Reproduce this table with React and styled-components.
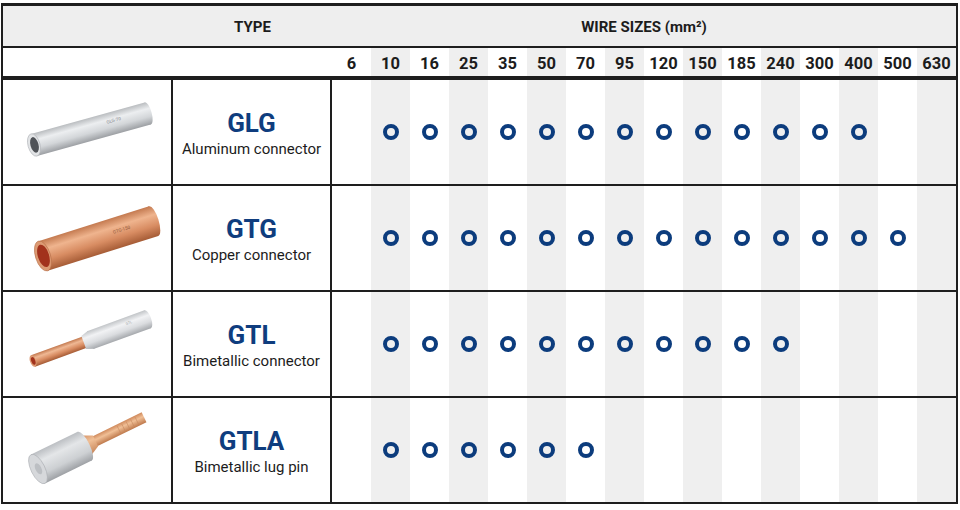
import React from 'react';
import styled, { createGlobalStyle } from 'styled-components';

const SIZES = [6, 10, 16, 25, 35, 50, 70, 95, 120, 150, 185, 240, 300, 400, 500, 630];

// drawings of the four connectors

const AluminumTube = () => (
    <svg width="168" height="104" viewBox="0 0 168 104">
        <defs>
            <linearGradient id="aluA" x1="0" y1="0" x2="0" y2="1">
                <stop offset="0" stopColor="#b9bcbf" />
                <stop offset="0.3" stopColor="#eceef0" />
                <stop offset="0.65" stopColor="#d3d6d9" />
                <stop offset="1" stopColor="#9c9fa3" />
            </linearGradient>
        </defs>
        <g transform="translate(31 65) rotate(-15.5)">
            <rect x="0" y="-11.5" width="118" height="23" fill="url(#aluA)" />
            <ellipse cx="118" cy="0" rx="4" ry="11.5" fill="url(#aluA)" />
            <ellipse cx="0" cy="0" rx="6" ry="11.5" fill="#e2e4e6" stroke="#aeb1b5" strokeWidth="0.6" />
            <ellipse cx="0.5" cy="0" rx="4" ry="8" fill="#505358" />
            <text x="76" y="-1" fontSize="4.5" fill="#85888c" fontFamily="Roboto, sans-serif">GLG-70</text>
        </g>
    </svg>
);

const CopperTube = () => (
    <svg width="168" height="104" viewBox="0 0 168 104">
        <defs>
            <linearGradient id="cuA" x1="0" y1="0" x2="0" y2="1">
                <stop offset="0" stopColor="#c47a50" />
                <stop offset="0.3" stopColor="#efb48e" />
                <stop offset="0.65" stopColor="#d88c62" />
                <stop offset="1" stopColor="#a65c36" />
            </linearGradient>
        </defs>
        <g transform="translate(40 70) rotate(-17.5)">
            <rect x="0" y="-15.5" width="116" height="31" fill="url(#cuA)" />
            <ellipse cx="116" cy="0" rx="5" ry="15.5" fill="url(#cuA)" />
            <ellipse cx="0" cy="0" rx="7.5" ry="15.5" fill="#dc9a73" stroke="#b86f48" strokeWidth="0.6" />
            <ellipse cx="0.5" cy="0" rx="5.6" ry="11.6" fill="#a2321c" />
            <text x="74" y="0" fontSize="4.5" fill="#8a5234" fontFamily="Roboto, sans-serif">GTG-150</text>
        </g>
    </svg>
);

const BimetalTube = () => (
    <svg width="168" height="104" viewBox="0 0 168 104">
        <defs>
            <linearGradient id="cuB" x1="0" y1="0" x2="0" y2="1">
                <stop offset="0" stopColor="#c47a50" />
                <stop offset="0.3" stopColor="#efb894" />
                <stop offset="0.65" stopColor="#d88c62" />
                <stop offset="1" stopColor="#a65c36" />
            </linearGradient>
            <linearGradient id="aluB" x1="0" y1="0" x2="0" y2="1">
                <stop offset="0" stopColor="#c2c5c8" />
                <stop offset="0.3" stopColor="#f1f2f4" />
                <stop offset="0.65" stopColor="#dadcdf" />
                <stop offset="1" stopColor="#a6a9ad" />
            </linearGradient>
        </defs>
        <g transform="translate(30 69) rotate(-20)">
            <rect x="0" y="-6" width="58" height="12" fill="url(#cuB)" />
            <ellipse cx="0" cy="0" rx="3" ry="6" fill="#dc9a73" />
            <ellipse cx="0.3" cy="0" rx="2" ry="4" fill="#a2321c" />
            <polygon points="54,-7 62,-9.5 62,9.5 54,7" fill="url(#aluB)" />
            <rect x="61" y="-9.5" width="61" height="19" fill="url(#aluB)" />
            <ellipse cx="122" cy="0" rx="3.5" ry="9.5" fill="url(#aluB)" />
            <text x="100" y="-2" fontSize="3.5" fill="#9a9da1" fontFamily="Roboto, sans-serif">GTL</text>
        </g>
    </svg>
);

const LugPin = () => (
    <svg width="168" height="104" viewBox="0 0 168 104">
        <defs>
            <linearGradient id="cuC" x1="0" y1="0" x2="0" y2="1">
                <stop offset="0" stopColor="#d08a5c" />
                <stop offset="0.4" stopColor="#f0bf96" />
                <stop offset="1" stopColor="#bf7a4d" />
            </linearGradient>
            <linearGradient id="aluC" x1="0" y1="0" x2="0" y2="1">
                <stop offset="0" stopColor="#bcbfc3" />
                <stop offset="0.3" stopColor="#e4e6e8" />
                <stop offset="0.7" stopColor="#cdd0d3" />
                <stop offset="1" stopColor="#9ea1a5" />
            </linearGradient>
        </defs>
        <g transform="translate(35 71) rotate(-26)">
            <rect x="62" y="-5.5" width="56" height="11" fill="url(#cuC)" />
            <g stroke="#c4855a" strokeWidth="0.5">
                <line x1="90" y1="-4" x2="90" y2="4" />
                <line x1="95" y1="-4" x2="95" y2="4" />
                <line x1="100" y1="-4" x2="100" y2="4" />
                <line x1="105" y1="-4" x2="105" y2="4" />
                <line x1="110" y1="-4" x2="110" y2="4" />
            </g>
            <polygon points="50,-13 64,-6 64,6 50,13" fill="url(#cuC)" />
            <rect x="0" y="-16" width="52" height="32" fill="url(#aluC)" />
            <ellipse cx="52" cy="0" rx="5" ry="16" fill="url(#aluC)" />
            <ellipse cx="0" cy="0" rx="7" ry="16" fill="#d6d8db" stroke="#abaeb2" strokeWidth="0.6" />
            <ellipse cx="0.5" cy="0" rx="3" ry="6" fill="#bcbfc3" />
        </g>
    </svg>
);

const PRODUCTS = [
    { code: 'GLG', name: 'Aluminum connector', last: 13, Picture: AluminumTube },
    { code: 'GTG', name: 'Copper connector', last: 14, Picture: CopperTube },
    { code: 'GTL', name: 'Bimetallic connector', last: 11, Picture: BimetalTube },
    { code: 'GTLA', name: 'Bimetallic lug pin', last: 6, Picture: LugPin },
];

const App = () => {
    return (
        <>
            <GlobalStyle />
            <Page>
                <Table>
                    <HeaderRow>
                        <span />
                        <HeadCell>TYPE</HeadCell>
                        <HeadCell $wide>WIRE SIZES (mm²)</HeadCell>
                    </HeaderRow>
                    <SizeRow>
                        <BlankCell />
                        {SIZES.map((size, i) => (
                            <SizeCell key={size} $shaded={i % 2 === 1}>
                                {size}
                            </SizeCell>
                        ))}
                    </SizeRow>
                    {PRODUCTS.map(({ code, name, last, Picture }) => (
                        <ProductRow key={code}>
                            <PicCell>
                                <Picture />
                            </PicCell>
                            <NameCell>
                                <Code>{code}</Code>
                                <Desc>{name}</Desc>
                            </NameCell>
                            {SIZES.map((size, i) => (
                                <MarkCell key={size} $shaded={i % 2 === 1}>
                                    {i >= 1 && i <= last && <Ring />}
                                </MarkCell>
                            ))}
                        </ProductRow>
                    ))}
                </Table>
            </Page>
        </>
    );
};

export default App;

// Styled Components

const GlobalStyle = createGlobalStyle`
    * {
        box-sizing: border-box;
    }

    body {
        margin: 0;
        background: #ffffff;
        font-family: Roboto, "Liberation Sans", Arial, sans-serif;
        color: #1c1c1c;
    }
`;

const Page = styled.div`
    padding: 3px 0 0 1px;
`;

const Table = styled.div`
    width: 957px;
    border: 2px solid #1e1e1e;
    border-top-width: 3px;
`;

const Grid = styled.div`
    display: grid;
    grid-template-columns: 170px 159px repeat(16, 39px);
`;

const HeaderRow = styled(Grid)`
    height: 42px;
    background: #eeeeee;
    border-bottom: 2px solid #1e1e1e;
    align-items: center;
    padding-top: 1px;
`;

const HeadCell = styled.div`
    grid-column: ${({ $wide }) => ($wide ? '3 / -1' : '2')};
    text-align: center;
    font-size: 15px;
    font-weight: 700;
    color: #1c1c1c;
`;

const SizeRow = styled(Grid)`
    height: 32px;
    border-bottom: 4px solid #1e1e1e;
`;

const BlankCell = styled.div`
    grid-column: 1 / 3;
`;

const SizeCell = styled.div`
    display: flex;
    align-items: center;
    justify-content: center;
    padding-top: 2px;
    background: ${({ $shaded }) => ($shaded ? '#efefef' : '#ffffff')};
    font-size: 16.5px;
    font-weight: 700;
    color: #1c1c1c;
`;

const ProductRow = styled(Grid)`
    height: 106px;
    border-bottom: 2px solid #1e1e1e;

    &:last-child {
        height: 104px;
        border-bottom: none;
    }
`;

const PicCell = styled.div`
    display: flex;
    align-items: center;
    justify-content: center;
    border-right: 2px solid #1e1e1e;
`;

const NameCell = styled.div`
    display: flex;
    flex-direction: column;
    align-items: center;
    justify-content: center;
    border-right: 2px solid #1e1e1e;
    padding-top: 2px;
`;

const Code = styled.div`
    font-size: 26px;
    font-weight: 700;
    line-height: 30px;
    color: #0f3d7e;
`;

const Desc = styled.div`
    margin-top: 1px;
    font-size: 15px;
    line-height: 20px;
    color: #1c1c1c;
`;

const MarkCell = styled.div`
    display: flex;
    align-items: center;
    justify-content: center;
    background: ${({ $shaded }) => ($shaded ? '#efefef' : '#ffffff')};
`;

const Ring = styled.span`
    width: 16px;
    height: 16px;
    border: 4.5px solid #0c3c7d;
    border-radius: 50%;
`;
